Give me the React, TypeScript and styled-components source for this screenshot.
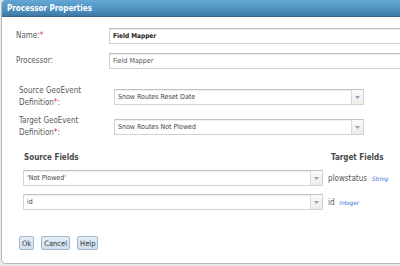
import { FC } from 'react';
import styled, { createGlobalStyle } from 'styled-components';

const GlobalStyle = createGlobalStyle`
  html, body {
    margin: 0;
    padding: 0;
    background: #e9e9e9;
    overflow: hidden;
  }
  body {
    font-family: "DejaVu Sans Condensed", Tahoma, "DejaVu Sans", sans-serif;
  }
`;

const Dialog = styled.div`
  margin-left: 1px;
  width: 430px;
  height: 264px;
  background: #fff;
  border: 1px solid #b9b9b9;
  border-top: none;
  border-radius: 4px 4px 5px 5px;
  box-sizing: border-box;
  overflow: hidden;
  display: flex;
  flex-direction: column;
`;

const Header = styled.div`
  height: 16px;
  flex: none;
  display: flex;
  align-items: center;
  padding-left: 5px;
  background: linear-gradient(#66a8d4, #4a8bbb 70%, #3e77a3);
  border-bottom: 1px solid #34658c;
  color: #fff;
  font-weight: bold;
  font-size: 8px;
`;

const Body = styled.div`
  display: flex;
  flex-direction: column;
  padding-top: 11px;
`;

const Row = styled.div<{ $labelWidth: number; $indent: number; $height: number }>`
  display: grid;
  grid-template-columns: ${(p) => p.$labelWidth}px 1fr;
  align-items: center;
  padding-left: ${(p) => p.$indent}px;
  height: ${(p) => p.$height}px;
`;

const Label = styled.div`
  color: #5a5a5a;
  font-size: 8px;
  line-height: 12px;
`;

const Req = styled.span`
  color: #e0302c;
`;

const TextInput = styled.div<{ $bold?: boolean }>`
  height: 16px;
  box-sizing: border-box;
  border: 1px solid #cfcfcf;
  border-top-color: #bdbdbd;
  box-shadow: inset 0 1px 1px #ececec;
  display: flex;
  align-items: center;
  padding-left: 3px;
  font-size: ${(p) => (p.$bold ? '6.5px' : '7px')};
  color: ${(p) => (p.$bold ? '#222' : '#555')};
  font-weight: ${(p) => (p.$bold ? 'bold' : 'normal')};
`;

const SelectBox = styled.div<{ $width: number }>`
  width: ${(p) => p.$width}px;
  height: 16px;
  flex: none;
  box-sizing: border-box;
  border: 1px solid #d2d2d2;
  border-top-color: #c2c2c2;
  box-shadow: inset 0 1px 1px #eeeeee;
  display: flex;
  align-items: center;
  font-size: 7px;
  color: #444;
`;

const SelectText = styled.div`
  flex: 1;
  padding-left: 3px;
  white-space: nowrap;
  overflow: hidden;
`;

const SelectButton = styled.div`
  width: 11px;
  height: 100%;
  border-left: 1px solid #d8d8d8;
  background: linear-gradient(#fafafa, #ececec);
  display: flex;
  align-items: center;
  justify-content: center;
`;

const Gap = styled.div<{ $h: number }>`
  height: ${(p) => p.$h}px;
`;

const FieldsHead = styled.div`
  display: grid;
  grid-template-columns: 307px 1fr;
  padding-left: 22px;
  height: 12px;
  align-items: center;
  font-size: 8px;
  font-weight: bold;
  color: #4a4a4a;
`;

const MapRow = styled.div`
  display: flex;
  align-items: center;
  padding-left: 21px;
  height: 16px;
  gap: 5px;
`;

const TargetName = styled.span`
  font-size: 8px;
  color: #555;
  white-space: nowrap;
`;

const TargetType = styled.span`
  font-size: 6px;
  font-style: italic;
  color: #3b6fd6;
  margin-left: 5px;
`;

const Buttons = styled.div`
  display: flex;
  gap: 7px;
  padding-left: 17px;
`;

const Btn = styled.div`
  height: 14px;
  box-sizing: border-box;
  padding: 0 2px;
  border: 1px solid #9fb6cc;
  border-radius: 2px;
  background: linear-gradient(#e4eef8, #cfdfee);
  display: flex;
  align-items: center;
  font-size: 7.5px;
  color: #333;
`;

const Arrow: FC = () => (
  <svg width="5" height="3" viewBox="0 0 5 3">
    <path d="M0 0 H5 L2.5 3 Z" fill="#8aa4c2" />
  </svg>
);

const Select: FC<{ value: string; width: number }> = ({ value, width }) => (
  <SelectBox $width={width}>
    <SelectText>{value}</SelectText>
    <SelectButton>
      <Arrow />
    </SelectButton>
  </SelectBox>
);

const mappings = [
  { source: "'Not Plowed'", target: 'plowstatus', type: 'String' },
  { source: 'id', target: 'id', type: 'Integer' },
];

export default function App() {
  return (
    <>
      <GlobalStyle />
      <Dialog>
        <Header>Processor Properties</Header>
        <Body>
          <Row $labelWidth={93} $indent={14} $height={16}>
            <Label>
              Name:<Req>*</Req>
            </Label>
            <TextInput $bold>Field Mapper</TextInput>
          </Row>
          <Gap $h={9} />
          <Row $labelWidth={93} $indent={14} $height={16}>
            <Label>Processor:</Label>
            <TextInput>Field Mapper</TextInput>
          </Row>
          <Gap $h={16} />
          <Row $labelWidth={95} $indent={17} $height={24}>
            <Label>
              Source GeoEvent
              <br />
              Definition<Req>*</Req>:
            </Label>
            <Select value="Snow Routes Reset Date" width={250} />
          </Row>
          <Gap $h={6} />
          <Row $labelWidth={95} $indent={17} $height={24}>
            <Label>
              Target GeoEvent
              <br />
              Definition<Req>*</Req>:
            </Label>
            <Select value="Snow Routes Not Plowed" width={250} />
          </Row>
          <Gap $h={12} />
          <FieldsHead>
            <span>Source Fields</span>
            <span>Target Fields</span>
          </FieldsHead>
          <Gap $h={7} />
          {mappings.map((m, i) => (
            <div key={m.target}>
              {i > 0 && <Gap $h={8} />}
              <MapRow>
                <Select value={m.source} width={300} />
                <TargetName>
                  {m.target}
                  <TargetType>{m.type}</TargetType>
                </TargetName>
              </MapRow>
            </div>
          ))}
          <Gap $h={26} />
          <Buttons>
            <Btn>Ok</Btn>
            <Btn>Cancel</Btn>
            <Btn>Help</Btn>
          </Buttons>
        </Body>
      </Dialog>
    </>
  );
}
